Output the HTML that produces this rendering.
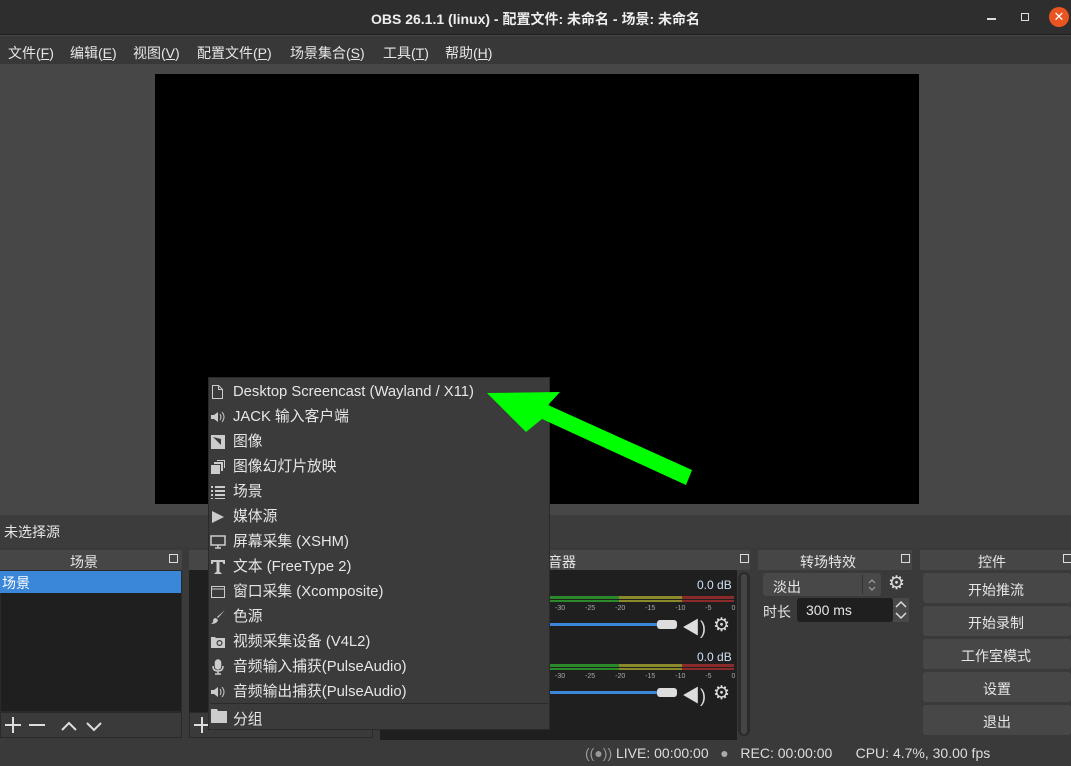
<!DOCTYPE html>
<html><head><meta charset="utf-8"><style>
*{margin:0;padding:0;box-sizing:border-box}
body{width:1071px;height:766px;overflow:hidden;background:#474747;font-family:"Liberation Sans","Noto Sans CJK SC",sans-serif;color:#e6e6e6;position:relative;font-size:14px}
.a{position:absolute}
.t{white-space:nowrap}
.mi{height:25px;line-height:25px;white-space:nowrap;position:relative;padding-left:23px;overflow:hidden;font-size:14.8px}
.mi svg{position:absolute;left:0;top:4px}
</style></head><body>
<div class="a" style="left:0;top:0;width:1071px;height:35px;background:#2f2e2e;border-bottom:1px solid #1e1e1e"></div>
<div class="a t" style="left:0;width:1071px;top:9px;text-align:center;font-weight:bold;font-size:14px;color:#eee">OBS 26.1.1 (linux) - 配置文件: 未命名 - 场景: 未命名</div>
<div class="a" style="left:987px;top:18px;width:9px;height:2px;background:#ddd"></div>
<div class="a" style="left:1021px;top:13px;width:8px;height:8px;border:1.5px solid #ddd"></div>
<div class="a" style="left:1049px;top:7px;width:20px;height:20px;border-radius:50%;background:#e95420;color:#fff;font-size:13px;text-align:center;line-height:20px">✕</div>
<div class="a" style="left:0;top:36px;width:1071px;height:28px;background:#383838"></div>
<div class="a t" style="left:8px;top:43px">文件(<u>F</u>)</div>
<div class="a t" style="left:70px;top:43px">编辑(<u>E</u>)</div>
<div class="a t" style="left:133px;top:43px">视图(<u>V</u>)</div>
<div class="a t" style="left:197px;top:43px">配置文件(<u>P</u>)</div>
<div class="a t" style="left:290px;top:43px">场景集合(<u>S</u>)</div>
<div class="a t" style="left:383px;top:43px">工具(<u>T</u>)</div>
<div class="a t" style="left:445px;top:43px">帮助(<u>H</u>)</div>
<div class="a" style="left:155px;top:74px;width:764px;height:430px;background:#000"></div>
<div class="a" style="left:0;top:515px;width:1071px;height:32px;background:#3c3c3c"></div>
<div class="a t" style="left:4px;top:522px;font-size:14px">未选择源</div>
<div class="a" style="left:0;top:547px;width:1071px;height:193px;background:#3a3a3a"></div>
<div class="a" style="left:0;top:550px;width:182px;height:20px;background:#464646"></div>
<div class="a t" style="left:70px;top:552px">场景</div>
<div class="a" style="left:169px;top:554px;width:9px;height:9px;border:1px solid #ddd"></div>
<div class="a" style="left:0;top:570px;width:182px;height:142px;background:#1f1f1f;border:1px solid #2a2a2a"></div>
<div class="a" style="left:0;top:571px;width:181px;height:22px;background:#3a87da"></div>
<div class="a t" style="left:2px;top:573px;color:#fff">场景</div>
<div class="a" style="left:0;top:712px;width:182px;height:26px;background:#3a3a3a;border:1px solid #2a2a2a"></div>
<svg class="a" style="left:0;top:712px" width="182" height="26" stroke="#ddd" stroke-width="2" fill="none"><path d="M5 13h16M13 5v16M29 13h16M62 18l7-7 7 7M87 11l7 7 7-7"/></svg>
<div class="a" style="left:189px;top:550px;width:184px;height:20px;background:#464646"></div>
<div class="a" style="left:189px;top:570px;width:184px;height:142px;background:#1f1f1f"></div>
<div class="a" style="left:189px;top:712px;width:184px;height:26px;background:#3a3a3a;border:1px solid #2a2a2a"></div>
<svg class="a" style="left:189px;top:712px" width="30" height="26" stroke="#ddd" stroke-width="2"><path d="M5 13h16M13 5v16"/></svg>
<div class="a" style="left:380px;top:550px;width:370px;height:20px;background:#464646"></div>
<div class="a t" style="left:534px;top:552px">混音器</div>
<div class="a" style="left:740px;top:554px;width:9px;height:9px;border:1px solid #ddd"></div>
<div class="a" style="left:380px;top:570px;width:357px;height:170px;background:#1f1f1f"></div>
<div class="a" style="left:738px;top:572px;width:12px;height:164px;background:#2b2b2b;border-radius:6px"></div>
<div class="a" style="left:741px;top:574px;width:6px;height:160px;background:#454545;border-radius:3px"></div>
<div class="a t" style="left:697px;top:578px;font-size:12px;color:#cfe0f5">0.0 dB</div>
<div class="a" style="left:550px;top:596px;width:69px;height:6px;background:#2a8a2a"></div>
<div class="a" style="left:619px;top:596px;width:63px;height:6px;background:#8a8a2a"></div>
<div class="a" style="left:682px;top:596px;width:52px;height:6px;background:#8a2a2a"></div>
<div class="a" style="left:550px;top:599px;width:184px;height:1px;background:#1f1f1f"></div>
<div class="a t" style="left:555px;top:605px;font-size:7px;color:#aaa;word-spacing:18px">-30 -25 -20 -15 -10 -5 0</div>
<div class="a" style="left:550px;top:623px;width:108px;height:3px;background:#3a87da"></div>
<div class="a" style="left:657px;top:620px;width:20px;height:9px;background:#ddd;border-radius:3px"></div>
<div class="a t" style="left:682px;top:614px;font-size:18px;color:#ddd">◀)</div>
<div class="a t" style="left:713px;top:614px;font-size:19px;color:#ddd">⚙</div>
<div class="a t" style="left:697px;top:650px;font-size:12px;color:#cfe0f5">0.0 dB</div>
<div class="a" style="left:550px;top:664px;width:69px;height:6px;background:#2a8a2a"></div>
<div class="a" style="left:619px;top:664px;width:63px;height:6px;background:#8a8a2a"></div>
<div class="a" style="left:682px;top:664px;width:52px;height:6px;background:#8a2a2a"></div>
<div class="a" style="left:550px;top:667px;width:184px;height:1px;background:#1f1f1f"></div>
<div class="a t" style="left:555px;top:673px;font-size:7px;color:#aaa;word-spacing:18px">-30 -25 -20 -15 -10 -5 0</div>
<div class="a" style="left:550px;top:691px;width:108px;height:3px;background:#3a87da"></div>
<div class="a" style="left:657px;top:688px;width:20px;height:9px;background:#ddd;border-radius:3px"></div>
<div class="a t" style="left:682px;top:682px;font-size:18px;color:#ddd">◀)</div>
<div class="a t" style="left:713px;top:682px;font-size:19px;color:#ddd">⚙</div>
<div class="a" style="left:758px;top:550px;width:154px;height:20px;background:#464646"></div>
<div class="a t" style="left:800px;top:552px">转场特效</div>
<div class="a" style="left:901px;top:554px;width:9px;height:9px;border:1px solid #ddd"></div>
<div class="a" style="left:763px;top:573px;width:118px;height:23px;background:#484848;border-radius:3px"></div>
<div class="a" style="left:862px;top:575px;width:1px;height:19px;background:#333"></div>
<div class="a t" style="left:773px;top:577px">淡出</div>
<svg class="a" style="left:865px;top:576px" width="14" height="18" stroke="#aaa" fill="none"><path d="M4 7l3-3 3 3M4 11l3 3 3-3"/></svg>
<div class="a t" style="left:888px;top:572px;font-size:19px;color:#ddd">⚙</div>
<div class="a t" style="left:763px;top:602px">时长</div>
<div class="a" style="left:797px;top:598px;width:96px;height:24px;background:#1f1f1f;border-radius:3px"></div>
<div class="a t" style="left:806px;top:602px">300 ms</div>
<div class="a" style="left:893px;top:598px;width:16px;height:24px;background:#484848"></div>
<svg class="a" style="left:893px;top:598px" width="16" height="24" stroke="#ddd" stroke-width="1.5" fill="none"><path d="M3 9l5-5 5 5M3 15l5 5 5-5"/></svg>
<div class="a" style="left:920px;top:550px;width:151px;height:20px;background:#464646"></div>
<div class="a t" style="left:978px;top:552px">控件</div>
<div class="a" style="left:1063px;top:554px;width:9px;height:9px;border:1px solid #ddd"></div>
<div class="a" style="left:923px;top:573px;width:148px;height:30px;background:#474747;border-radius:3px"></div>
<div class="a t" style="left:968px;top:580px">开始推流</div>
<div class="a" style="left:923px;top:606px;width:148px;height:30px;background:#474747;border-radius:3px"></div>
<div class="a t" style="left:968px;top:613px">开始录制</div>
<div class="a" style="left:923px;top:639px;width:148px;height:30px;background:#474747;border-radius:3px"></div>
<div class="a t" style="left:961px;top:646px">工作室模式</div>
<div class="a" style="left:923px;top:672px;width:148px;height:30px;background:#474747;border-radius:3px"></div>
<div class="a t" style="left:983px;top:679px">设置</div>
<div class="a" style="left:923px;top:705px;width:148px;height:30px;background:#474747;border-radius:3px"></div>
<div class="a t" style="left:983px;top:712px">退出</div>
<div class="a" style="left:0;top:740px;width:1071px;height:26px;background:#3a3a3a"></div>
<div class="a t" style="left:585px;top:745px;font-size:14px;color:#ddd"><span style="color:#999">((●))</span> LIVE: 00:00:00 &nbsp;&nbsp;<span style="color:#aaa">●</span>&nbsp;&nbsp; REC: 00:00:00 &nbsp;&nbsp;&nbsp;&nbsp; CPU: 4.7%, 30.00 fps</div>
<div class="a" style="left:208px;top:377px;width:342px;height:353px;background:#3b3b3b;border:1px solid #2a2a2a"></div>
<div class="a" style="left:210px;top:380px;color:#e6e6e6">
<div class="mi"><svg width="14" height="16" fill="none" stroke="#ccc"><path d="M2.5 1.5h6l4 4v9h-10z M8.5 1.5v4h4"/></svg>Desktop Screencast (Wayland / X11)</div>
<div class="mi"><svg width="16" height="16" fill="#ccc"><path d="M1 6h3l4-3v10l-4-3H1z"/><path d="M10 5q2 3 0 6M12 3q4 5 0 10" stroke="#ccc" fill="none"/></svg>JACK 输入客户端</div>
<div class="mi"><svg width="16" height="16"><rect x="1" y="1" width="14" height="14" fill="#ccc"/><path d="M3 3l8 8V5z" fill="#3b3b3b"/></svg>图像</div>
<div class="mi"><svg width="16" height="16" fill="#ccc"><rect x="1" y="6" width="9" height="9"/><path d="M4 3h9v9h-2V5H4zM7 1h8v8h-1V2H7z"/></svg>图像幻灯片放映</div>
<div class="mi"><svg width="16" height="16" fill="#ccc"><rect x="1" y="2" width="2" height="2"/><rect x="5" y="2" width="10" height="2"/><rect x="1" y="6" width="2" height="2"/><rect x="5" y="6" width="10" height="2"/><rect x="1" y="10" width="2" height="2"/><rect x="5" y="10" width="10" height="2"/><rect x="1" y="14" width="2" height="1"/><rect x="5" y="14" width="10" height="1"/></svg>场景</div>
<div class="mi"><svg width="16" height="16" fill="#ccc"><path d="M2 2l12 6-12 6z"/></svg>媒体源</div>
<div class="mi"><svg width="16" height="16" fill="none" stroke="#ccc" stroke-width="1.5"><rect x="1" y="2" width="14" height="9"/><path d="M5 14h6M8 11v3"/></svg>屏幕采集 (XSHM)</div>
<div class="mi"><svg width="16" height="16" fill="#ccc"><path d="M1 1h14v4h-1.5l-1-2H9.5v10l2 1v1h-7v-1l2-1V3H3.5l-1 2H1z"/></svg>文本 (FreeType 2)</div>
<div class="mi"><svg width="16" height="16" fill="none" stroke="#ccc"><rect x="1.5" y="2.5" width="13" height="11"/><path d="M1.5 5h13"/></svg>窗口采集 (Xcomposite)</div>
<div class="mi"><svg width="16" height="16" fill="#ccc"><path d="M15 1L8 9l-1-1z"/><path d="M6 9l2 2q-1 4-7 4q3-2 2-4q1-2 3-2z"/></svg>色源</div>
<div class="mi"><svg width="16" height="16" fill="#ccc"><path d="M1 3h4l1 1h9v10H1z"/><circle cx="9.5" cy="9" r="3" fill="#3b3b3b"/><circle cx="9.5" cy="9" r="1.8" fill="#ccc"/></svg>视频采集设备 (V4L2)</div>
<div class="mi"><svg width="16" height="16" fill="none" stroke="#ccc" stroke-width="1.5"><rect x="5.5" y="1" width="5" height="9" rx="2.5" fill="#ccc"/><path d="M3 7q0 5 5 5t5-5M8 12v3M5 15h6"/></svg>音频输入捕获(PulseAudio)</div>
<div class="mi"><svg width="16" height="16" fill="#ccc"><path d="M1 6h3l4-3v10l-4-3H1z"/><path d="M10 5q2 3 0 6M12 3q4 5 0 10" stroke="#ccc" fill="none"/></svg>音频输出捕获(PulseAudio)</div>
</div>
<div class="a" style="left:210px;top:703px;width:338px;height:1px;background:#2a2a2a"></div>
<svg class="a" style="left:210px;top:708px" width="18" height="16" fill="#ccc"><path d="M1 1h6l1 2h9v12H1z"/></svg>
<div class="a t" style="left:233px;top:708px;font-size:14.8px">分组</div>
<svg class="a" style="left:0;top:0" width="1071" height="766"><polygon points="487,393 560,392 548,405 692,470 686,485 542,419 526,432" fill="#00ff00"/></svg>
</body></html>
